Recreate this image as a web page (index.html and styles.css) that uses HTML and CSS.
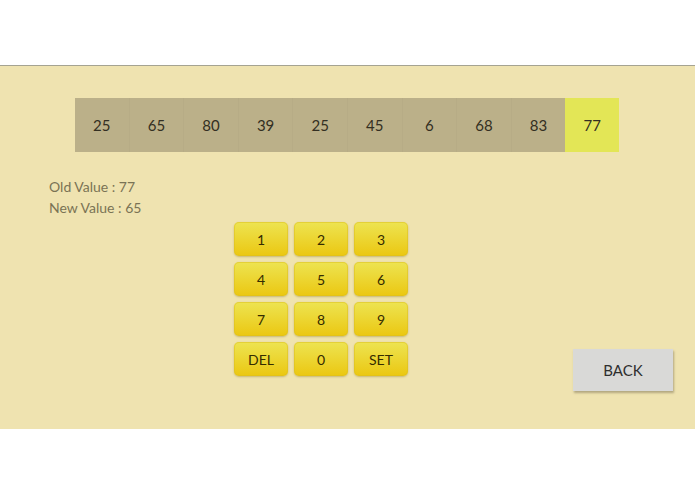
FILE: index.html
```html
<!DOCTYPE html>
<html>
<head>
<meta charset="utf-8">
<link rel="stylesheet" href="styles.css">
</head>
<body>
<div class="top"></div>
<main class="panel">
  <div class="array">
    <div class="cell">25</div>
    <div class="cell">65</div>
    <div class="cell">80</div>
    <div class="cell">39</div>
    <div class="cell">25</div>
    <div class="cell">45</div>
    <div class="cell">6</div>
    <div class="cell">68</div>
    <div class="cell">83</div>
    <div class="cell active">77</div>
  </div>
  <div class="values">
    <div>Old Value : 77</div>
    <div>New Value : 65</div>
  </div>
  <div class="lower">
    <div class="keypad">
      <button class="key">1</button>
      <button class="key">2</button>
      <button class="key">3</button>
      <button class="key">4</button>
      <button class="key">5</button>
      <button class="key">6</button>
      <button class="key">7</button>
      <button class="key">8</button>
      <button class="key">9</button>
      <button class="key">DEL</button>
      <button class="key">0</button>
      <button class="key">SET</button>
    </div>
    <button class="back">BACK</button>
  </div>
</main>
</body>
</html>
```
FILE: styles.css
```css
html, body {
  margin: 0;
  padding: 0;
  background: #ffffff;
  font-family: Lato, "Open Sans", sans-serif;
}
.top {
  height: 65px;
  border-bottom: 1px solid #a5a392;
}
.panel {
  height: 363px;
  background: #efe3b0;
  padding-top: 32px;
  box-sizing: border-box;
}
.array {
  display: flex;
  margin-left: 75px;
  width: 544px;
  height: 54px;
}
.cell {
  flex: 1;
  display: flex;
  align-items: center;
  justify-content: center;
  background: #bbb089;
  color: #332f22;
  font-size: 15px;
  border-left: 1px solid #b7ac86;
}
.cell:first-child { border-left: none; }
.cell.active {
  background: #e3e656;
  border-left: none;
}
.values {
  margin: 24px 0 0 49px;
  color: #7a7355;
  font-size: 14px;
  line-height: 21px;
}
.lower {
  display: flex;
  margin-top: 4px;
}
.keypad {
  margin-left: 234px;
  display: grid;
  grid-template-columns: repeat(3, 54px);
  grid-auto-rows: 34px;
  column-gap: 6px;
  row-gap: 6px;
}
.key {
  border: none;
  border-radius: 5px;
  background: linear-gradient(#ede452, #ebc711);
  box-shadow: 0 1px 2px rgba(150, 130, 40, 0.45), inset 0 0 0 1px rgba(220, 190, 30, 0.5);
  color: #352c00;
  font-family: Lato, "Open Sans", sans-serif;
  font-size: 14px;
  padding: 0;
}
.back {
  margin: 127px 22px 0 auto;
  width: 100px;
  height: 42px;
  border: none;
  background: #d9d9d7;
  box-shadow: 1px 2px 2px rgba(120, 110, 80, 0.5);
  color: #2e2e2e;
  font-family: Lato, "Open Sans", sans-serif;
  font-size: 15px;
  padding: 0;
}
```
